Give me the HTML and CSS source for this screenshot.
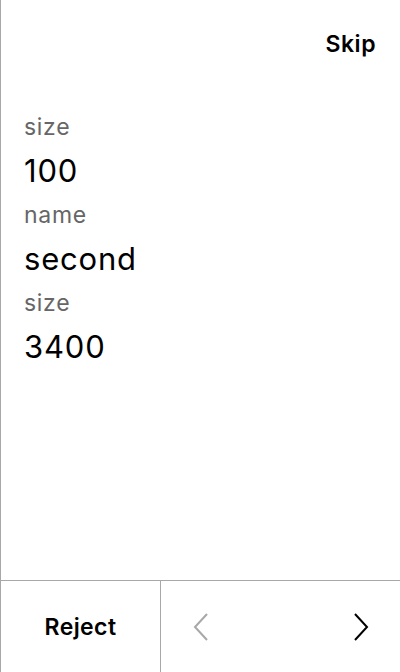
FILE: index.html
```html
<!DOCTYPE html>
<html>
<head>
<meta charset="utf-8">
<link rel="stylesheet" href="styles.css">
</head>
<body>
<div class="screen">
  <header class="header">
    <span class="skip">Skip</span>
  </header>
  <main class="content">
    <div class="field">
      <div class="label">size</div>
      <div class="value">100</div>
    </div>
    <div class="field">
      <div class="label">name</div>
      <div class="value">second</div>
    </div>
    <div class="field">
      <div class="label">size</div>
      <div class="value">3400</div>
    </div>
  </main>
  <footer class="footer">
    <div class="reject">Reject</div>
    <div class="nav">
      <svg class="chev chev-prev" width="16" height="28" viewBox="0 0 16 28"><path d="M14 1 L2 14 L14 27" fill="none" stroke="currentColor" stroke-width="2"/></svg>
      <svg class="chev chev-next" width="16" height="28" viewBox="0 0 16 28"><path d="M2 1 L14 14 L2 27" fill="none" stroke="currentColor" stroke-width="2"/></svg>
    </div>
  </footer>
</div>
</body>
</html>
```
FILE: styles.css
```css
html, body {
  margin: 0;
  padding: 0;
  background: #fff;
}
body {
  font-family: Inter, "Noto Sans", sans-serif;
  color: #000;
}
.screen {
  width: 400px;
  height: 672px;
  box-sizing: border-box;
  border-left: 1px solid #a8a8a8;
  display: flex;
  flex-direction: column;
}
.header {
  height: 88px;
  display: flex;
  align-items: center;
  justify-content: flex-end;
  padding-right: 24px;
}
.skip {
  font-size: 23px;
  font-weight: 600;
  letter-spacing: 0.5px;
}
.content {
  flex: 1;
  padding: 25px 23px 0;
}
.field {
  display: flex;
  flex-direction: column;
}
.label {
  font-size: 23px;
  line-height: 28px;
  letter-spacing: 0.7px;
  color: #666;
}
.value {
  font-size: 31px;
  line-height: 60px;
  letter-spacing: 0.8px;
  color: #000;
}
.footer {
  height: 92px;
  box-sizing: border-box;
  border-top: 1px solid #a8a8a8;
  display: flex;
}
.reject {
  width: 159px;
  border-right: 1px solid #a8a8a8;
  display: flex;
  align-items: center;
  justify-content: center;
  font-size: 23px;
  font-weight: 600;
  letter-spacing: 0.4px;
}
.nav {
  flex: 1;
  display: flex;
  align-items: center;
  justify-content: space-between;
  padding: 0 31px 0 32px;
}
.chev-prev { color: #a8a8a8; }
.chev-next { color: #000; }
```
